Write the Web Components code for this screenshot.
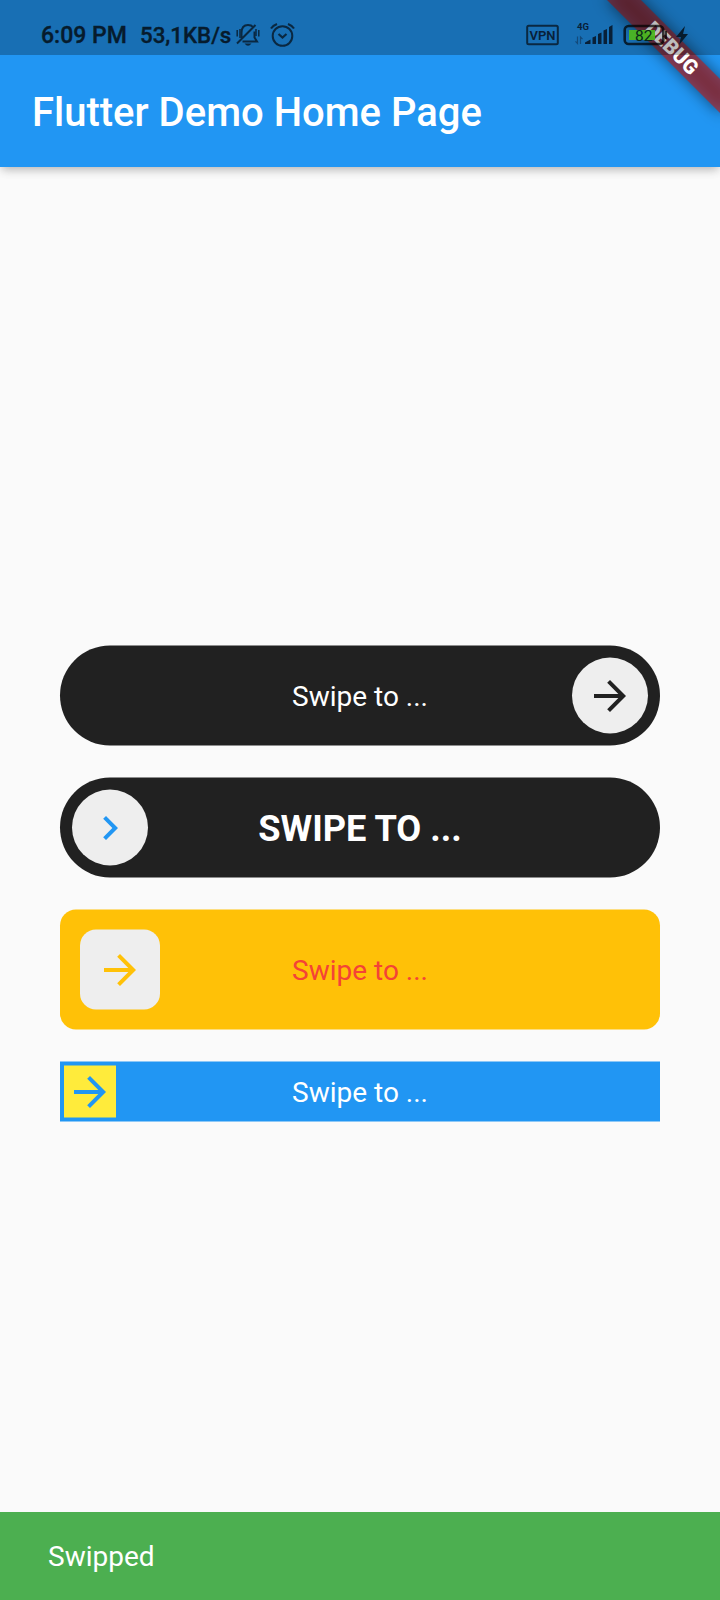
<!DOCTYPE html>
<html lang="en">
<head>
<meta charset="utf-8">
<title>Flutter Demo Home Page</title>
<style>
html,body{margin:0;padding:0}
body{font-family:Roboto,"Liberation Sans",sans-serif;background:#fafafa;overflow:hidden}
</style>
</head>
<body>
<demo-app></demo-app>
<script>
const define = (name, html) => {
  const t = document.createElement('template');
  t.innerHTML = html;
  customElements.define(name, class extends HTMLElement {
    constructor() {
      super();
      this.attachShadow({mode: 'open'}).appendChild(t.content.cloneNode(true));
    }
  });
};

define('status-bar', `
<style>
:host{display:flex;box-sizing:border-box;height:55px;width:720px;background:rgba(0,0,0,.26);color:#061b2d;position:relative;z-index:3;align-items:flex-start}
span{white-space:pre;-webkit-text-stroke:.35px #061b2d}
.time,.rate{font:500 23px/28px Roboto,sans-serif;margin-top:22px}
.time{margin-left:41px;width:99px}
.rate{width:93px;font-size:22.300px;margin-top:21px}
svg{display:block}
.right{margin-left:auto;display:block}
</style>
<span class="time">6:09 PM</span><span class="rate">53,1KB/s</span>
<svg width="64" height="55" viewBox="233 0 64 55" fill="none" stroke="#0a2841" stroke-width="2">
<path d="M241.500 38v-5c0-5 2-8 6.500-8 2 0 4 .7 5 2M254.500 31.500v6l2.500 4h-14.500M237 43.500l18.500-18.500"/>
<path d="M237.200 30v6.500M240 29v9M258.800 30v6.500M256 29v7" stroke-width="1.500"/>
<path d="M244.500 43.500h7q-3.500 4.500-7 0z" fill="#0a2841" stroke="none"/>
<circle cx="282.500" cy="36" r="9.800" stroke-width="2"/><path d="M278.500 34l4 3.500 4-3.500M271 28.500q2-3 6-4.500M294 28.500q-2-3-6-4.500" stroke-width="2.200"/>
</svg>
<svg class="right" width="200" height="55" viewBox="520 0 200 55">
<rect x="527.200" y="25.700" width="30.600" height="18.600" rx="1.500" fill="none" stroke="#0a2841" stroke-width="2"/>
<text x="542.500" y="39.500" text-anchor="middle" font-family="Roboto" font-weight="600" font-size="13" fill="#082038">VPN</text>
<text x="577" y="30" font-family="Roboto" font-weight="700" font-size="9.500" fill="#082038">4G</text>
<g fill="#082038"><path d="M585 44v-1.500l5.500-3V44zM592.500 37.500l3.500-1.500v8h-3.500zM598 34l3.500-1.500V44H598zM603.500 30.500L607 29v15h-3.500zM609 27l3.500-2v19H609z"/></g>
<path d="M577.500 36.500v7l-2-2.200M580.500 44v-7l2 2.200" fill="none" stroke="#134a7b" stroke-width="1.200"/>
<rect x="624.700" y="26" width="38.600" height="18" rx="4" fill="none" stroke="#000" stroke-opacity=".72" stroke-width="2.600"/>
<rect x="629" y="30" width="26" height="10" fill="#4db81f" fill-opacity=".94"/>
<path d="M665 31h2v8h-2z" fill="#000" fill-opacity=".72"/>
<text x="635" y="40.500" font-family="Roboto" font-weight="400" font-size="15.500" fill="#08251a">82</text>
<path d="M685 26l-9 11h5l-2 8 9-11h-5z" fill="#061b2d"/>
</svg>`);

define('debug-banner', `
<style>
:host{position:absolute;top:0;right:0;width:150px;height:150px;overflow:hidden;z-index:2}
div{position:absolute;left:21.900px;top:36.100px;width:160px;height:24px;transform:rotate(45deg);color:#fff;text-align:center;font:900 20.400px/24px Roboto,sans-serif}
.shadow{background:rgba(0,0,0,.5);filter:blur(7.500px)}
.band{background:rgba(183,28,28,.63)}
</style>
<div class="shadow"></div><div class="band">DEBUG</div>`);

define('app-bar', `
<style>
:host{display:flex;box-sizing:border-box;height:112px;padding:4px 0 0 32px;align-items:center;color:#fff;font-weight:500;font-size:40px;line-height:48px}
</style>
<slot></slot>`);

define('swipe-button', `
<style>
:host{display:flex;box-sizing:border-box;width:600px;height:var(--h,100px);border-radius:var(--r,50px);background:var(--bg,#212121);padding:var(--pad,12px);align-items:center;justify-content:var(--side,flex-start);position:relative;flex:none}
.knob{display:flex;align-items:center;justify-content:center;width:var(--k,76px);height:var(--k,76px);border-radius:var(--kr,50%);background:var(--kbg,#eee)}
svg{width:48px;height:48px;fill:var(--icon,#212121);transform:translateY(.5px)}
.label{position:absolute;inset:0;display:flex;align-items:center;justify-content:center;color:var(--fg,#fff);transform:translateY(var(--dy,.5px))}
.chev{display:none}
:host([icon=chevron]) .chev{display:block}
:host([icon=chevron]) .arrow{display:none}
</style>
<div class="knob"><svg viewBox="0 0 24 24"><path class="arrow" d="M12 4l-1.410 1.410L16.170 11H4v2h12.170l-5.580 5.590L12 20l8-8z"/><path class="chev" d="M10 6L8.590 7.410 13.170 12l-4.580 4.590L10 18l6-6z"/></svg></div>
<div class="label"><slot></slot></div>`);

define('snack-bar', `
<style>
:host{display:flex;box-sizing:border-box;height:88px;padding-left:48px;align-items:center;background:#4caf50;color:#fff;font-size:28px;line-height:33px}
</style>
<slot></slot>`);

define('demo-app', `
<style>
:host{display:flex;flex-direction:column;width:720px;height:1600px;position:relative;overflow:hidden;background:#fafafa}
header{background:#2196f3;height:167px;flex:none;box-shadow:0 4px 9px -2px rgba(0,0,0,.25),0 2px 12px rgba(0,0,0,.07)}
main{flex:1;display:flex;flex-direction:column;align-items:center;gap:32px;padding-top:478px;font-size:28px;line-height:33px;transform:translateY(.5px)}
.two{--icon:#2196f3;--dy:1.500px;font-size:36.200px;font-weight:700;line-height:42px}
.three{--h:120px;--r:16px;--bg:#ffc107;--pad:20px;--k:80px;--kr:16px;--icon:#ffc107;--fg:#f44336}
.four{--h:60px;--r:0;--bg:#2196f3;--pad:4px;--k:52px;--kr:0;--kbg:#ffeb3b;--icon:#2196f3}
.one{--side:flex-end}
</style>
<header><status-bar></status-bar><app-bar>Flutter Demo Home Page</app-bar></header>
<debug-banner></debug-banner>
<main>
<swipe-button class="one">Swipe to ...</swipe-button>
<swipe-button class="two" icon="chevron">SWIPE TO ...</swipe-button>
<swipe-button class="three">Swipe to ...</swipe-button>
<swipe-button class="four">Swipe to ...</swipe-button>
</main>
<snack-bar>Swipped</snack-bar>`);
</script>
</body>
</html>
